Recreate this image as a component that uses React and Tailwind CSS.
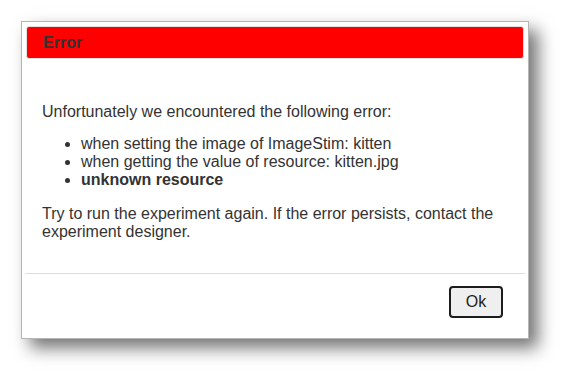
import React from 'react';

const reasons = [
  { text: 'when setting the image of ImageStim: kitten' },
  { text: 'when getting the value of resource: kitten.jpg' },
  { text: 'unknown resource', strong: true },
];

const App = () => {
  return (
    <div className="min-h-screen bg-white pt-[21px] pl-[21px] font-['Liberation_Sans',Arial,sans-serif] text-[#333]">
      {/* Dialog */}
      <div className="w-[508px] h-[318px] bg-white border border-[#b5b5b5] p-1 flex flex-col shadow-[9px_9px_16px_rgba(0,0,0,0.55)]">
        <div className="h-[33px] shrink-0 flex items-center pl-4 bg-[#ff0000] border border-[#e2e2e2] rounded-[3px] text-[16px] font-bold text-[#333]">
          Error
        </div>

        <div className="px-4 pt-[44px] text-[16px] leading-[18px]">
          <p className="mb-[14px]">Unfortunately we encountered the following error:</p>
          <ul className="list-disc pl-[39px] mb-4">
            {reasons.map((r) => (
              <li key={r.text} className={r.strong ? 'font-bold' : ''}>
                {r.text}
              </li>
            ))}
          </ul>
          <p>
            Try to run the experiment again. If the error persists, contact the experiment designer.
          </p>
        </div>

        <div className="mt-[32px] -mx-px border-t border-[#dddddd]" />

        <div className="flex justify-end pt-3 pr-[21px]">
          <button className="w-[54px] h-[32px] rounded-[4px] border-2 border-[#1c1c1c] bg-[#efefef] text-[16px] text-[#222]">
            Ok
          </button>
        </div>
      </div>
    </div>
  );
};

export default App;
